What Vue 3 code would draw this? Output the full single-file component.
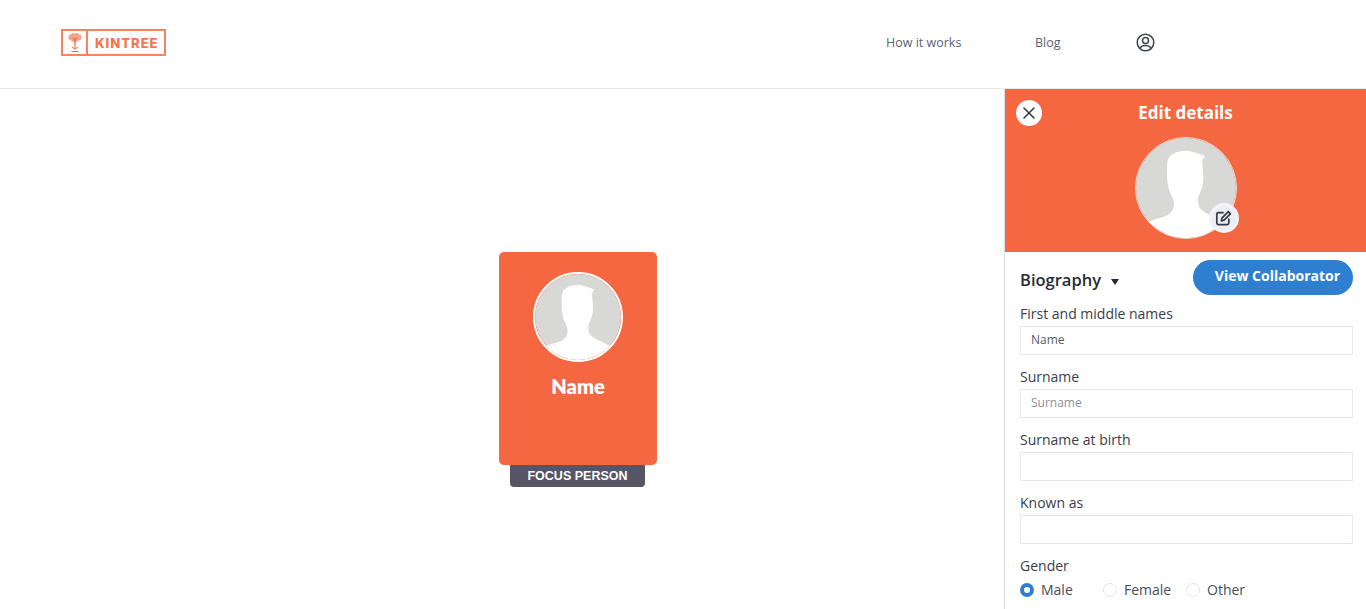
<template>
  <div class="page">
    <header class="topbar">
      <div class="logo">
        <div class="logo-mark">
          <svg width="16" height="21" viewBox="0 0 16 21" fill="none">
            <path d="M8 1.500c1.500-1 3.500-.5 4 .8 1.800-.1 3 1.500 2.400 3 .5 1.600-.8 3-2.400 2.900-.7 1.200-1.800 1.700-3 1.500l-.6 3H7.500l-.6-3c-1.200.2-2.300-.3-3-1.500C2.300 8.300 1 6.900 1.600 5.300 1 3.800 2.200 2.200 4 2.300c.6-1.300 2.500-1.800 4-.8z" fill="#f8a48d"/>
            <path d="M8 5v12M5 15l3 2 3-2M4.500 19.500h7M5.500 5.500 8 8.500l2.500-3" stroke="#f56a43" stroke-width="1"/>
          </svg>
        </div>
        <span class="logo-text">KINTREE</span>
      </div>
      <nav class="nav">
        <a class="nav-link how">How it works</a>
        <a class="nav-link blog">Blog</a>
        <svg class="user-icon" width="19" height="19" viewBox="0 0 19 19" fill="none" stroke="#3d4452" stroke-width="1.500">
          <circle cx="9.500" cy="9.500" r="8.300"/>
          <circle cx="9.500" cy="7.500" r="3"/>
          <path d="M4 15.500c.8-2.300 2.800-3 5.500-3s4.700.7 5.500 3"/>
        </svg>
      </nav>
    </header>

    <main class="content">
      <section class="canvas">
        <div class="node">
          <div class="node-card">
            <svg class="avatar node-avatar" viewBox="0 0 100 100">
              <circle cx="50" cy="50" r="50" fill="#d8d8d6"/>
              <path :d="silhouette" fill="#fff"/>
            </svg>
            <div class="node-name">Name</div>
          </div>
          <div class="node-tag">FOCUS PERSON</div>
        </div>
      </section>

      <aside class="panel">
        <div class="panel-head">
          <button class="close-btn">
            <svg width="14" height="14" viewBox="0 0 14 14" stroke="#2f3542" stroke-width="1.500" stroke-linecap="round">
              <path d="M2 2l10 10M12 2L2 12"/>
            </svg>
          </button>
          <h2 class="panel-title">Edit details</h2>
          <div class="panel-avatar">
            <svg class="avatar" viewBox="0 0 100 100">
              <circle cx="50" cy="50" r="50" fill="#d8d8d6"/>
              <path :d="silhouette" fill="#fff"/>
            </svg>
            <span class="edit-badge">
              <svg width="17" height="17" viewBox="0 0 16 16" fill="none" stroke="#333a48" stroke-width="1.600" stroke-linecap="round" stroke-linejoin="round">
                <path d="M7.500 2.500H3.200c-.9 0-1.500.6-1.500 1.500v8.300c0 .9.600 1.500 1.500 1.500h8.300c.9 0 1.500-.6 1.500-1.500V8.500"/>
                <path d="M6 10.200l.5-2.600 6-6 2 2-6 6z"/>
              </svg>
            </span>
          </div>
        </div>

        <div class="panel-body">
          <div class="section-row">
            <div class="section-title">Biography <span class="caret"></span></div>
            <button class="collab-btn">View Collaborator</button>
          </div>

          <div v-for="field in fields" :key="field.label" class="field">
            <label class="field-label">{{ field.label }}</label>
            <input class="field-input" :value="field.value" :placeholder="field.placeholder" />
          </div>

          <div class="field">
            <label class="field-label">Gender</label>
            <div class="radios">
              <label v-for="g in genders" :key="g.name" class="radio" :style="{ width: g.width + 'px' }">
                <input type="radio" name="gender" :checked="g.name === 'Male'" />
                <span>{{ g.name }}</span>
              </label>
            </div>
          </div>
        </div>
      </aside>
    </main>
  </div>
</template>

<script setup>
const silhouette =
  "M33 19C38 14 46 12 53 13C59 14 64 16 69 18L66 23C67 30 68 38 67 46C66 53 62 57 62 62C62 68 64 72 70 75C75 78 81 80 87 84C77 95 64 100 50 100C36 100 23 95 12 84C18 81 26 80 32 77C36 74 38 71 38 66C38 60 33 55 32 47C31 42 31 38 31 33C31 27 31 23 33 19Z";

const fields = [
  { label: "First and middle names", value: "Name", placeholder: "" },
  { label: "Surname", value: "", placeholder: "Surname" },
  { label: "Surname at birth", value: "", placeholder: "" },
  { label: "Known as", value: "", placeholder: "" },
];

const genders = [
  { name: "Male", width: 83 },
  { name: "Female", width: 83 },
  { name: "Other", width: 70 },
];
</script>

<style>
html,
body {
  margin: 0;
  background: #fff;
  overflow: hidden;
}
</style>

<style scoped>
.page {
  height: 609px;
  overflow: hidden;
  font-family: "Open Sans", "Liberation Sans", sans-serif;
  color: #2d3340;
}

.topbar {
  height: 85px;
  border-bottom: 1px solid #e8e8e8;
  display: flex;
  align-items: center;
  justify-content: space-between;
  padding-left: 61px;
  padding-bottom: 3px;
}

.logo {
  width: 105px;
  height: 27px;
  box-sizing: border-box;
  border: 2px solid #f8835f;
  display: flex;
  align-items: center;
}

.logo-mark {
  width: 25px;
  height: 100%;
  border-right: 2px solid #f8835f;
  display: flex;
  align-items: center;
  justify-content: center;
  box-sizing: border-box;
}

.logo-text {
  margin-left: 7px;
  font-family: Inter, sans-serif;
  font-weight: 800;
  font-size: 13px;
  letter-spacing: 1px;
  color: #f6754f;
}

.nav {
  display: flex;
  align-items: center;
  width: 480px;
}

.nav-link {
  font-size: 12.500px;
  color: #5b6370;
}

.how {
  width: 149px;
}

.blog {
  width: 101px;
}

.user-icon {
  display: block;
}

.content {
  display: flex;
  height: 520px;
}

.canvas {
  flex: 1;
  position: relative;
}

.node {
  position: absolute;
  left: 499px;
  top: 163px;
  width: 158px;
  display: flex;
  flex-direction: column;
}

.node-card {
  width: 158px;
  height: 213px;
  background: #f46741;
  border-radius: 5px;
  display: flex;
  flex-direction: column;
  align-items: center;
  padding-top: 20px;
  box-sizing: border-box;
}

.avatar {
  display: block;
  width: 100%;
  height: 100%;
  border-radius: 50%;
}

.node-avatar {
  width: 90px;
  height: 90px;
  box-sizing: border-box;
  border: 2px solid #fff;
}

.node-name {
  margin-top: 12px;
  font-family: Lato, sans-serif;
  font-weight: 800;
  font-size: 20px;
  color: #fff;
}

.node-tag {
  width: 135px;
  height: 22px;
  margin-left: 11px;
  background: #565465;
  border-radius: 0 0 4px 4px;
  color: #fff;
  font-family: "Liberation Sans", sans-serif;
  font-weight: 700;
  font-size: 12.500px;
  line-height: 23px;
  text-align: center;
}

.panel {
  width: 362px;
  box-sizing: border-box;
  border-left: 1px solid #d9dde6;
  display: flex;
  flex-direction: column;
}

.panel-head {
  flex-shrink: 0;
  height: 163px;
  background: #f46741;
  position: relative;
  display: flex;
  flex-direction: column;
  align-items: center;
}

.close-btn {
  position: absolute;
  left: 11px;
  top: 11px;
  width: 26px;
  height: 26px;
  padding: 0;
  border: 0;
  border-radius: 50%;
  background: #fff;
  display: flex;
  align-items: center;
  justify-content: center;
}

.panel-title {
  margin: 11px 0 0;
  font-size: 17px;
  line-height: 26px;
  font-weight: 700;
  color: #fff;
}

.panel-avatar {
  position: relative;
  width: 102px;
  height: 102px;
  margin-top: 11px;
  box-sizing: border-box;
  border: 1px solid #e6e2de;
  border-radius: 50%;
}

.edit-badge {
  position: absolute;
  right: -3px;
  bottom: 5px;
  width: 30px;
  height: 30px;
  box-sizing: border-box;
  border: 3px solid #f2f3f6;
  border-radius: 50%;
  background: #eceef3;
  display: flex;
  align-items: center;
  justify-content: center;
}

.panel-body {
  padding: 8px 13px 0 15px;
}

.section-row {
  display: flex;
  justify-content: space-between;
  height: 35px;
  margin-bottom: 9px;
}

.section-title {
  font-size: 16.500px;
  font-weight: 600;
  line-height: 40px;
  height: 40px;
  color: #262b38;
  display: flex;
  align-items: center;
  gap: 10px;
}

.caret {
  width: 0;
  height: 0;
  border-left: 4.500px solid transparent;
  border-right: 4.500px solid transparent;
  border-top: 6px solid #262b38;
  margin-top: 4px;
}

.collab-btn {
  width: 160px;
  height: 35px;
  border: 0;
  border-radius: 18px;
  background: #2f7fd1;
  color: #fff;
  font-family: "Open Sans", sans-serif;
  font-weight: 700;
  font-size: 14px;
  padding: 0 0 4px 9px;
}

.field {
  height: 63px;
}

.field-label {
  display: block;
  font-size: 14px;
  line-height: 20px;
  height: 22px;
  color: #3a3d4a;
}

.field-input {
  display: block;
  width: 100%;
  height: 29px;
  box-sizing: border-box;
  border: 1px solid #e5e8f2;
  padding: 0 10px 2px;
  outline: none;
  font-family: "Open Sans", sans-serif;
  font-size: 12px;
  color: #555b68;
}

.field-input::placeholder {
  color: #8a8f9a;
  opacity: 1;
}

.radios {
  display: flex;
  padding-top: 2px;
}

.radio {
  display: flex;
  align-items: center;
  gap: 7px;
  font-size: 14px;
  color: #4a4d5a;
}

.radio input {
  appearance: none;
  width: 14px;
  height: 14px;
  margin: 0;
  border: 1px solid #dfe5f0;
  border-radius: 50%;
  background: #fff;
}

.radio input:checked {
  border: 4px solid #2f7fd1;
}
</style>
